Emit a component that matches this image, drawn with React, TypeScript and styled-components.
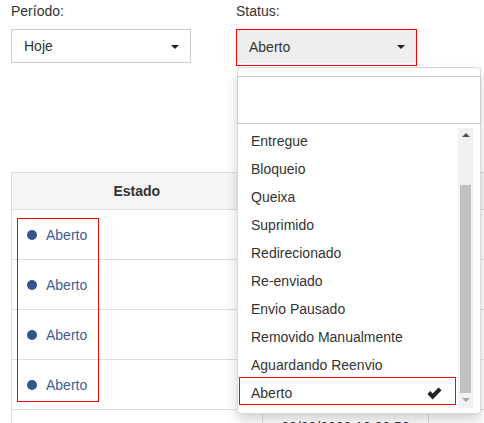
import styled, { createGlobalStyle } from "styled-components";

const GlobalStyle = createGlobalStyle`
  html, body {
    margin: 0;
    padding: 0;
    overflow: hidden;
    background: #fff;
  }
  body {
    font-family: "Liberation Sans", Arial, sans-serif;
    font-size: 14px;
    color: #333;
  }
  * {
    box-sizing: border-box;
  }
`;

const Page = styled.div`
  width: 484px;
  height: 423px;
  padding: 1px 0 0 11px;
`;

const Filters = styled.div`
  display: grid;
  grid-template-columns: 225px 182px;
`;

const Field = styled.div`
  position: relative;
  display: flex;
  flex-direction: column;
  align-items: flex-start;
`;

const Label = styled.label`
  line-height: 20px;
  margin-bottom: 8px;
`;

const SelectBox = styled.div<{ $open?: boolean }>`
  display: flex;
  align-items: center;
  justify-content: space-between;
  width: ${(p) => (p.$open ? "179px" : "180px")};
  height: ${(p) => (p.$open ? "33px" : "34px")};
  padding: 0 11px 0 12px;
  border: ${(p) => (p.$open ? "none" : "1px solid #ccc")};
  background: ${(p) => (p.$open ? "#eee" : "#fff")};
  color: #333;
  line-height: 20px;
`;

const Caret = styled.span`
  width: 0;
  height: 0;
  border-left: 4px solid transparent;
  border-right: 4px solid transparent;
  border-top: 4px solid #222;
  margin-top: 1px;
`;

const Highlight = styled.div`
  border: 1px solid #f00;
  padding-bottom: 2px;
`;

const Menu = styled.div`
  position: absolute;
  top: 66px;
  left: 1px;
  z-index: 5;
  width: 244px;
  background: #fff;
  border: 1px solid rgba(0, 0, 0, 0.15);
  border-radius: 4px;
  box-shadow: 0 6px 12px rgba(0, 0, 0, 0.175);
`;

const Search = styled.div`
  margin: 8px -1px 0;
  height: 48px;
  border: 1px solid #ccc;
`;

const ListArea = styled.div`
  display: flex;
  padding: 1px 7px 5px 1px;
`;

const Options = styled.ul`
  list-style: none;
  margin: 0;
  padding: 0;
  width: 217px;
`;

const Option = styled.li<{ $selected?: boolean }>`
  display: flex;
  align-items: center;
  justify-content: space-between;
  height: 28px;
  padding: 5px 13px 1px 11px;
  line-height: 20px;
  border: 1px solid ${(p) => (p.$selected ? "#f00" : "transparent")};
  color: #333;
`;

const Scrollbar = styled.div`
  display: flex;
  flex-direction: column;
  align-items: center;
  width: 15px;
  margin: 3px 0 0 2px;
  height: 280px;
  background: #f1f1f1;
`;

const ScrollArrow = styled.span<{ $up?: boolean; $dim?: boolean }>`
  width: 0;
  height: 0;
  margin: 5px 0;
  border-left: 4px solid transparent;
  border-right: 4px solid transparent;
  ${(p) =>
    p.$up
      ? `border-bottom: 4px solid ${p.$dim ? "#a3a3a3" : "#505050"};`
      : `border-top: 4px solid ${p.$dim ? "#a3a3a3" : "#505050"};`}
`;

const Thumb = styled.div`
  width: 11px;
  height: 208px;
  margin-top: 43px;
  background: #c1c1c1;
`;

const TableWrap = styled.div`
  position: relative;
  margin-top: 106px;
`;

const Table = styled.table`
  border-collapse: collapse;
  width: 640px;
  border: 1px solid #ddd;
`;

const HeadCell = styled.th<{ $w: number }>`
  width: ${(p) => p.$w}px;
  height: 37px;
  background: #f5f5f5;
  border: 1px solid #ddd;
  font-weight: bold;
  text-align: center;
  padding: 0 8px;
`;

const Cell = styled.td`
  height: 50px;
  border: 1px solid #ddd;
  padding: 7px 8px 5px;
  vertical-align: top;
  text-align: center;
  line-height: 20px;
  color: #333;
`;

const StatusCell = styled(Cell)`
  vertical-align: middle;
  text-align: left;
  padding: 0 0 0 15px;
`;

const Status = styled.span`
  display: inline-flex;
  align-items: center;
  gap: 9px;
  color: #3f5c98;
`;

const Dot = styled.span`
  width: 10px;
  height: 10px;
  border-radius: 50%;
  background: #34558b;
`;

const Marker = styled.div`
  position: absolute;
  left: 6px;
  top: 46px;
  width: 82px;
  height: 184px;
  border: 1px solid #f00;
  pointer-events: none;
`;

const statuses = [
  "Entregue",
  "Bloqueio",
  "Queixa",
  "Suprimido",
  "Redirecionado",
  "Re-enviado",
  "Envio Pausado",
  "Removido Manualmente",
  "Aguardando Reenvio",
  "Aberto",
];

const Check = () => (
  <svg width="15" height="13" viewBox="0 0 15 13">
    <path d="M0.4 7 L3.3 4.1 L5.6 6.4 L11.6 0.4 L14.6 3.3 L5.6 12.4 Z" fill="#222" />
  </svg>
);

const App = () => {
  return (
    <Page>
      <GlobalStyle />
      <Filters>
        <Field>
          <Label>Período:</Label>
          <SelectBox>
            Hoje
            <Caret />
          </SelectBox>
        </Field>
        <Field>
          <Label>Status:</Label>
          <Highlight>
            <SelectBox $open>
              Aberto
              <Caret />
            </SelectBox>
          </Highlight>
          <Menu>
            <Search />
            <ListArea>
              <Options>
                {statuses.map((s) => (
                  <Option key={s} $selected={s === "Aberto"}>
                    {s}
                    {s === "Aberto" && <Check />}
                  </Option>
                ))}
              </Options>
              <Scrollbar>
                <ScrollArrow $up />
                <Thumb />
                <ScrollArrow $dim />
              </Scrollbar>
            </ListArea>
          </Menu>
        </Field>
      </Filters>
      <TableWrap>
        <Table>
          <thead>
            <tr>
              <HeadCell $w={251}>Estado</HeadCell>
              <HeadCell $w={167}>Data de envio</HeadCell>
              <HeadCell $w={222}>Data de abertura</HeadCell>
            </tr>
          </thead>
          <tbody>
            {[0, 1, 2, 3].map((i) => (
              <tr key={i}>
                <StatusCell>
                  <Status>
                    <Dot />
                    Aberto
                  </Status>
                </StatusCell>
                <Cell>00/00/2023 10:00:50</Cell>
                <Cell>-</Cell>
              </tr>
            ))}
            <tr>
              <StatusCell />
              <Cell>00/00/2023 10:00:50</Cell>
              <Cell>-</Cell>
            </tr>
          </tbody>
        </Table>
        <Marker />
      </TableWrap>
    </Page>
  );
};

export default App;
